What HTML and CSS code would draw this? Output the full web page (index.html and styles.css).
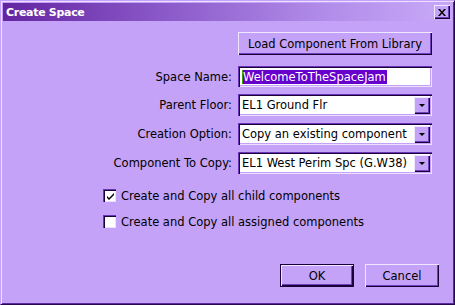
FILE: index.html
```html
<!DOCTYPE html>
<html>
<head>
<meta charset="utf-8">
<link rel="stylesheet" href="styles.css">
</head>
<body>
<div class="window">
  <div class="titlebar">
    <span class="title">Create Space</span>
    <button class="close" aria-label="Close">
      <svg width="8" height="7" viewBox="0 0 8 7"><path d="M0 0h2l2 2.5L6 0h2L5 3.5 8 7H6L4 4.5 2 7H0l3-3.5z" fill="#000"/></svg>
    </button>
  </div>
  <div class="content">
    <div class="row row-load">
      <span class="label"></span>
      <button class="btn wide">Load Component From Library</button>
    </div>
    <div class="row row-name">
      <span class="label">Space Name:</span>
      <div class="field"><span class="sel">WelcomeToTheSpaceJam</span></div>
    </div>
    <div class="row row-sel">
      <span class="label">Parent Floor:</span>
      <div class="field select"><span class="val">EL1 Ground Flr</span><span class="arrow"></span></div>
    </div>
    <div class="row row-sel">
      <span class="label">Creation Option:</span>
      <div class="field select"><span class="val">Copy an existing component</span><span class="arrow"></span></div>
    </div>
    <div class="row row-sel">
      <span class="label">Component To Copy:</span>
      <div class="field select"><span class="val">EL1 West Perim Spc (G.W38)</span><span class="arrow"></span></div>
    </div>
    <label class="check first">
      <span class="box checked">
        <svg width="9" height="9" viewBox="0 0 9 9"><path d="M1 4l2 2 5-5v2L3 8 1 6z" fill="#000"/></svg>
      </span>
      <span>Create and Copy all child components</span>
    </label>
    <label class="check second">
      <span class="box"></span>
      <span>Create and Copy all assigned components</span>
    </label>
    <div class="actions">
      <button class="btn default">OK</button>
      <button class="btn cancel">Cancel</button>
    </div>
  </div>
</div>
</body>
</html>
```

FILE: styles.css
```css
html, body {
  margin: 0;
  padding: 0;
  background: #c4a2f8;
}
body {
  font-family: "DejaVu Sans", Verdana, sans-serif;
  font-size: 11.5px;
  color: #000;
}
.window {
  width: 455px;
  height: 305px;
  box-sizing: border-box;
  background: #c4a2f8;
  border-top: 1px solid #c4a2f8;
  border-left: 1px solid #c4a2f8;
  border-right: 1px solid #2a0850;
  border-bottom: 1px solid #2a0850;
  box-shadow: inset 1px 1px 0 #ecdfff, inset -1px -1px 0 #5a2aa0;
  padding: 2px 2px 2px 2px;
  display: flex;
  flex-direction: column;
}
.titlebar {
  height: 18px;
  background: linear-gradient(to right, #6424a0 0%, #8a58c8 35%, #b08ae8 70%, #c8aaf8 100%);
  display: flex;
  align-items: center;
  justify-content: space-between;
  padding: 0 2px 0 3px;
}
.title {
  color: #fff;
  font-weight: bold;
  font-size: 11px;
  letter-spacing: -0.3px;
  font-family: "DejaVu Sans", sans-serif;
}
.close {
  width: 16px;
  height: 14px;
  padding: 0;
  margin: 0;
  background: #c4a2f8;
  border: none;
  box-shadow: inset 1px 1px 0 #f0e6ff, inset -1px -1px 0 #1a0038, inset -2px -2px 0 #6a3ab0;
  display: flex;
  align-items: center;
  justify-content: center;
}
.content {
  flex: 1;
  display: flex;
  flex-direction: column;
  padding-top: 11px;
}
.row {
  display: flex;
  align-items: center;
  gap: 6px;
}
.label {
  width: 229px;
  text-align: right;
  flex: none;
}
.btn {
  font-family: "DejaVu Sans", sans-serif;
  font-size: 11.5px;
  color: #000;
  background: #c4a2f8;
  border: none;
  margin: 0;
  padding: 0;
  box-shadow: inset 1px 1px 0 #f0e6ff, inset -1px -1px 0 #1a0038, inset -2px -2px 0 #7040b8;
}
.wide {
  width: 194px;
  height: 23px;
}
.row-name {
  margin-top: 11px;
  height: 21px;
}
.row-sel {
  margin-top: 7px;
  height: 22px;
}
.field {
  width: 194px;
  height: 100%;
  box-sizing: border-box;
  background: #fff;
  box-shadow: inset 1px 1px 0 #6a34b8, inset 2px 2px 0 #1a0038, inset -1px -1px 0 #ecdfff, inset -2px -2px 0 #c4a2f8;
  display: flex;
  align-items: center;
  padding: 0 3px 0 4px;
  white-space: nowrap;
  overflow: hidden;
}
.sel {
  background: #6600cc;
  color: #fff;
  line-height: 14px;
  padding: 0 1px 0 0;
  border-left: 1px solid #3a9a10;
}
.select {
  padding-right: 2px;
  justify-content: space-between;
}
.arrow {
  width: 16px;
  height: 17px;
  flex: none;
  background: #c4a2f8;
  box-shadow: inset 1px 1px 0 #f0e6ff, inset -1px -1px 0 #1a0038, inset -2px -2px 0 #7040b8;
  position: relative;
}
.arrow::after {
  content: "";
  position: absolute;
  left: 5px;
  top: 7px;
  border-left: 3px solid transparent;
  border-right: 3px solid transparent;
  border-top: 3px solid #000;
}
.check {
  display: flex;
  align-items: center;
  gap: 5px;
  padding-left: 100px;
  height: 13px;
}
.check.first {
  margin-top: 15px;
}
.check.second {
  margin-top: 13px;
}
.box {
  width: 13px;
  height: 13px;
  box-sizing: border-box;
  background: #fff;
  box-shadow: inset 1px 1px 0 #6a34b8, inset 2px 2px 0 #1a0038, inset -1px -1px 0 #ecdfff;
  display: flex;
  align-items: center;
  justify-content: center;
  flex: none;
}
.box svg {
  margin: 1px 0 0 1px;
}
.actions {
  display: flex;
  justify-content: flex-end;
  gap: 11px;
  margin-top: 36px;
  padding-right: 13px;
}
.actions .btn {
  width: 74px;
  height: 23px;
}
.default {
  box-shadow: inset 1px 1px 0 #1a0038, inset -1px -1px 0 #1a0038, inset 2px 2px 0 #f0e6ff, inset -2px -2px 0 #1a0038, inset -3px -3px 0 #7040b8;
}
```
